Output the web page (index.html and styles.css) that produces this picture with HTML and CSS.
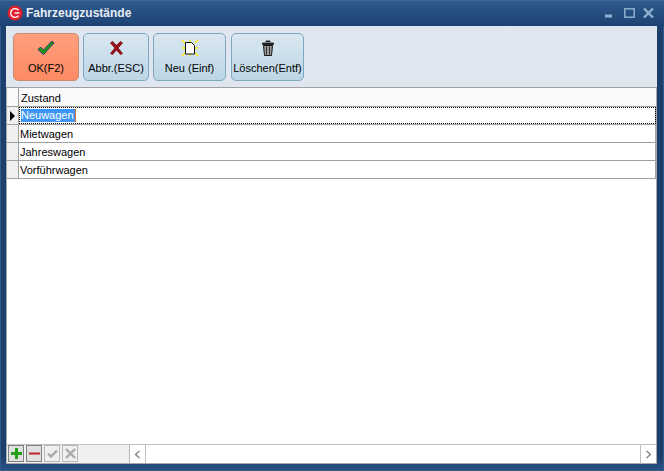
FILE: index.html
```html
<!DOCTYPE html>
<html lang="de">
<head>
<meta charset="utf-8">
<title>Fahrzeugzustände</title>
<link rel="stylesheet" href="styles.css">
</head>
<body>
<div class="window">
  <header class="titlebar">
    <svg class="logo" width="16" height="16" viewBox="0 0 16 16"><circle cx="8" cy="8" r="7.5" fill="#e0202c"/><path d="M11.5 5.2A4.4 4.4 0 1 0 11.5 10.8" fill="none" stroke="#fff" stroke-width="1.4"/><path d="M7.5 8h5" stroke="#fff" stroke-width="1.4"/></svg>
    <span class="title">Fahrzeugzustände</span>
    <div class="winbtns">
      <svg width="8" height="10" viewBox="0 0 8 10"><rect x="0" y="6.500" width="7" height="3" fill="#8fb0cc"/></svg>
      <svg width="11" height="10" viewBox="0 0 11 10"><rect x=".8" y=".8" width="9.400" height="8.400" fill="none" stroke="#8fb0cc" stroke-width="1.500"/></svg>
      <svg width="11" height="10" viewBox="0 0 11 10"><path d="M1 .5l9 9M10 .5l-9 9" stroke="#8fb0cc" stroke-width="2.400"/></svg>
    </div>
  </header>
  <div class="client">
    <div class="toolbar">
      <button class="tbtn ok">
        <svg width="18" height="16" viewBox="0 0 18 16"><path d="M1 9.500l2.500-2.500 3 3L15 1l2 2L6.500 14.500z" fill="#1f9a18" stroke="#14206a" stroke-width=".8"/></svg>
        <span>OK(F2)</span>
      </button>
      <button class="tbtn">
        <svg width="13" height="16" viewBox="0 0 13 16"><path d="M0 3L2.500 1 6.500 5 10.500 1 13 3 8.500 8 13 13.500 10.500 15 6.500 10.500 2.500 15 0 13.500 4.500 8z" fill="#8f1218"/></svg>
        <span>Abbr.(ESC)</span>
      </button>
      <button class="tbtn w73">
        <svg width="18" height="16" viewBox="0 0 18 16"><path d="M1 0l3 3M17 0l-3 3M1 16l3-3M17 16l-3-3M9 0v2M9 14v2M1 8h3M14 8h3" stroke="#ffee00" stroke-width="1.400"/><path d="M4.500 2.500h6l3 3v8.500h-9z" fill="#fff" stroke="#111"/></svg>
        <span>Neu (Einf)</span>
      </button>
      <button class="tbtn w73 last">
        <svg width="14" height="16" viewBox="0 0 14 16"><path d="M5 2V1h4v1M1.500 3h11v1.500h-11z" fill="#222" stroke="#111" stroke-width=".8"/><path d="M2.500 5.500h9l-1 10h-7z" fill="#999" stroke="#111"/><path d="M5.500 6.500v8M8.500 6.500v8" stroke="#333"/></svg>
        <span>Löschen(Entf)</span>
      </button>
    </div>
    <div class="grid">
      <div class="row head"><div class="ind"></div><div class="cell">Zustand</div></div>
      <div class="row"><div class="ind"><i class="arrow"></i></div><div class="cell current"><span class="sel">Neuwagen</span></div></div>
      <div class="row"><div class="ind"></div><div class="cell">Mietwagen</div></div>
      <div class="row"><div class="ind"></div><div class="cell">Jahreswagen</div></div>
      <div class="row"><div class="ind"></div><div class="cell">Vorführwagen</div></div>
      <div class="empty"></div>
      <div class="footer">
        <div class="nav">
          <button class="nbtn on"><svg width="11" height="11" viewBox="0 0 11 11"><path d="M5.500 0v11M0 5.500h11" stroke="#22a012" stroke-width="3"/></svg></button>
          <button class="nbtn on"><svg width="11" height="11" viewBox="0 0 11 11"><path d="M0 5.500h11" stroke="#c02030" stroke-width="2"/></svg></button>
          <button class="nbtn"><svg width="11" height="11" viewBox="0 0 11 11"><path d="M1 5.500l3 3 6-6" fill="none" stroke="#a8a8a8" stroke-width="2.400"/></svg></button>
          <button class="nbtn"><svg width="11" height="11" viewBox="0 0 11 11"><path d="M1 1l9 9M10 1l-9 9" stroke="#a8a8a8" stroke-width="2.400"/></svg></button>
        </div>
        <div class="scroll">
          <div class="sarrow"><svg width="7" height="9" viewBox="0 0 7 9"><path d="M5.500 1L1.500 4.500 5.500 8" fill="none" stroke="#808080" stroke-width="1.300"/></svg></div>
          <div class="strack"></div>
          <div class="sarrow right"><svg width="7" height="9" viewBox="0 0 7 9"><path d="M1.500 1L5.500 4.500 1.500 8" fill="none" stroke="#808080" stroke-width="1.300"/></svg></div>
        </div>
      </div>
    </div>
  </div>
</div>
</body>
</html>
```
FILE: styles.css
```css
* { box-sizing: border-box; }
html, body { margin: 0; height: 100%; overflow: hidden; }
body { font-family: "Liberation Sans", Arial, sans-serif; font-size: 11px; color: #000; }
.window {
  width: 664px; height: 471px; display: flex; flex-direction: column;
  background: linear-gradient(#1c3f6e 97%, #2a5585);
  padding: 0 7px 7px 6px;
  border-top: 1px solid #3f6a95;
  box-shadow: inset 1px 0 #2f5a8c, inset -1px 0 #2f5a8c, inset 0 -1px #2f5a8c;
}
.titlebar {
  height: 25px; flex: none; display: flex; align-items: center; margin: 0 -7px 0 -6px; padding: 0 10px 1px 7px;
  background: linear-gradient(#2e5a8c, #1c4273);
}
.logo { margin-right: 3px; }
.title { font-family: "Liberation Sans", sans-serif; font-weight: 700; font-size: 12px; color: #e6edf4; }
.winbtns { margin-left: auto; display: flex; gap: 8px; align-items: center; }
.winbtns svg:first-child { margin-right: 3px; }
.client { flex: 1; display: flex; flex-direction: column; background: #dfe6ef; min-height: 0; }
.toolbar { height: 61px; flex: none; display: flex; gap: 4px; padding: 7px 6px 6px 7px; }
.tbtn {
  width: 66px; height: 48px; padding: 6px 0 0; display: flex; flex-direction: column; align-items: center; gap: 6px;
  font: inherit; font-size: 11px; color: #000; white-space: nowrap;
  border: 1px solid #7ea7c0; border-radius: 5px;
  background: linear-gradient(#d9e7f1, #bcd6e5);
}
.tbtn svg { flex: none; }
.tbtn.ok { background: linear-gradient(#ff9f7d, #fd8a63); border-color: #c98a72; }
.w73 { width: 73px; }
.last { margin-left: 1px; }
.grid { flex: 1; display: flex; flex-direction: column; background: #fff; border: 1px solid #a8a8a8; border-top-color: #a0a0a0; min-height: 0; }
.row { height: 18px; flex: none; display: flex; border-bottom: 1px solid #a0a0a0; }
.ind { width: 12px; flex: none; background: #efefef; border-right: 1px solid #a0a0a0; display: flex; align-items: center; padding-left: 3px; }
.cell { flex: 1; padding: 2px 1px 0; line-height: 15px; border-right: 1px solid #a0a0a0; }
.head .ind, .head .cell { background: #fafafa; }
.head .cell { padding-left: 2px; padding-top: 3px; border-right: 0; }
.head { height: 19px; }
.current { outline: 1px dotted #000; outline-offset: -1px; padding-left: 2px; padding-top: 1px; }
.sel { background: #3d95f5; color: #fff; display: inline-block; line-height: 13px; height: 13px; padding-right: 1px; border-right: 1px solid #e07020; margin-top: 1px; }
.arrow { width: 0; height: 0; border-left: 5px solid #000; border-top: 5px solid transparent; border-bottom: 5px solid transparent; }
.empty { flex: 1; }
.footer { height: 19px; flex: none; display: flex; background: #f0f0f0; border-top: 1px solid #c0c0c0; }
.nav { width: 122px; flex: none; display: flex; gap: 2px; padding: 0 0 0 1px; }
.nbtn { width: 16px; height: 17px; padding: 0; display: flex; align-items: center; justify-content: center; background: #e0e0e0; border: 1px solid #808080; }
.nbtn:nth-child(n+3) { background: #f0f0f0; border-color: #b8b8b8; }
.scroll { flex: 1; display: flex; background: #fff; border-left: 1px solid #b8b8b8; }
.sarrow { width: 16px; flex: none; display: flex; align-items: center; justify-content: center; border-right: 1px solid #c0c0c0; }
.sarrow.right { border-right: 0; border-left: 1px solid #c0c0c0; }
.strack { flex: 1; }
```
